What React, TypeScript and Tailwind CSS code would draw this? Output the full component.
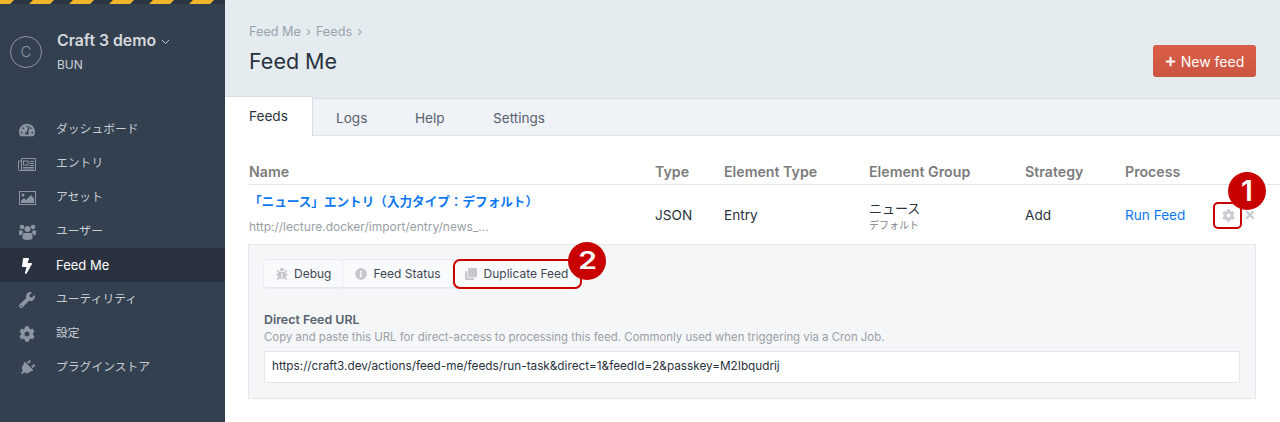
import {
  FaBolt,
  FaBug,
  FaClone,
  FaCog,
  FaInfoCircle,
  FaPlug,
  FaPlus,
  FaTachometerAlt,
  FaTimes,
  FaWrench,
} from "react-icons/fa";

const FONT = "font-['Inter','Noto_Sans_CJK_JP',sans-serif]";

const NewspaperIcon = ({ className }: { className?: string }) => (
  <svg className={className} width="18" height="13" viewBox="0 0 18 13" fill="none">
    <path d="M3.5.5h14v12H1.5a1 1 0 0 1-1-1V3h3" stroke="currentColor" />
    <path d="M3.5 1v11" stroke="currentColor" />
    <rect x="5.5" y="3" width="4.5" height="4" stroke="currentColor" />
    <path d="M11.5 3.5H16M11.5 5.5H16M11.5 7.5H16M5 9.5H16M5 11H16" stroke="currentColor" />
  </svg>
);

const ImageIcon = ({ className }: { className?: string }) => (
  <svg className={className} width="17" height="14" viewBox="0 0 17 14" fill="none">
    <rect x="0.5" y="0.5" width="16" height="13" stroke="currentColor" />
    <circle cx="4" cy="4" r="1.5" fill="currentColor" />
    <path d="M2 12v-2l3-3 2 2 5-5 3 3.5V12z" fill="currentColor" />
  </svg>
);

const UsersIcon = ({ className }: { className?: string }) => (
  <svg className={className} width="17" height="16" viewBox="0 0 17 16" fill="currentColor">
    <circle cx="3" cy="3" r="2.3" />
    <circle cx="14" cy="3" r="2.3" />
    <circle cx="8.5" cy="5" r="3" />
    <path d="M0 6.5h3.6a4.5 4.5 0 0 0 .6 2.4C3 9.4 2.4 10.4 2.3 11.5 1 11.3 0 10.8 0 10z" />
    <path d="M17 6.5h-3.6a4.5 4.5 0 0 1-.6 2.4c1.2.5 1.8 1.5 1.9 2.6 1.3-.2 2.3-.7 2.3-1.5z" />
    <path d="M5 9h7c1 .3 1.500 1.300 1.500 3v2c0 1-2 2-5 2s-5-1-5-2v-2c0-1.700.500-2.700 1.500-3z" />
  </svg>
);

const navItems = [
  { label: "ダッシュボード", icon: FaTachometerAlt },
  { label: "エントリ", icon: NewspaperIcon },
  { label: "アセット", icon: ImageIcon },
  { label: "ユーザー", icon: UsersIcon },
  { label: "Feed Me", icon: FaBolt, active: true },
  { label: "ユーティリティ", icon: FaWrench },
  { label: "設定", icon: FaCog },
  { label: "プラグインストア", icon: FaPlug, iconClass: "rotate-45" },
];

const Sidebar = () => {
  return (
    <aside className="w-[225px] shrink-0 bg-[#33404f] flex flex-col">
      <svg width="225" height="4" className="block shrink-0">
        <rect width="225" height="4" fill="#2c3643" />
        {[-40, 0, 40, 80, 120, 160, 200].map((x) => (
          <polygon key={x} points={`${x + 33},0 ${x + 54},0 ${x + 50},4 ${x + 29},4`} fill="#f5b32a" />
        ))}
      </svg>

      {/* Site name */}
      <div className="flex items-center pl-[10px] h-[96px]">
        <div className="w-8 h-8 rounded-full border border-[#8b96a2] flex items-center justify-center text-[#8b96a2] text-[15px] font-light">
          C
        </div>
        <div className="ml-[15px]">
          <div className="flex items-center text-[15.800px] leading-5 font-semibold text-[#d5d9de]">
            Craft 3 demo
            <svg className="ml-[5px] mt-[2px]" width="9" height="6" viewBox="0 0 9 6" fill="none">
              <path d="M1 1l3.5 3.5L8 1" stroke="#c6cbd1" strokeWidth="1" />
            </svg>
          </div>
          <div className="mt-[6px] text-xs leading-4 text-[#cbd0d6]">BUN</div>
        </div>
      </div>

      <nav className="mt-[12px]">
        {navItems.map((item) => {
          const Icon = item.icon;
          return (
            <div
              key={item.label}
              className={`h-[34px] pt-[2px] flex items-center pl-[18px] ${
                item.active ? "bg-[#29323e] text-white text-[13px]" : "text-[#c9ced4] text-[11.800px]"
              }`}
            >
              <span className="w-[38px] flex">
                <span className="w-[18px] flex justify-center">
                  <Icon
                    size={16}
                    className={`${item.active ? "text-white" : "text-[#8b96a2]"} ${item.iconClass || ""}`}
                  />
                </span>
              </span>
              {item.label}
            </div>
          );
        })}
      </nav>
    </aside>
  );
};

const PageHeader = () => {
  return (
    <div className="h-[99px] bg-[#e4ecf0] border-b border-[#d6dee5] flex justify-between pl-6 pr-6">
      <div className="pt-[24px]">
        <div className="flex items-center text-[12.700px] leading-[15px] text-[#9aa3ad]">
          Feed Me<span className="mx-[5px]">›</span>Feeds<span className="ml-[5px]">›</span>
        </div>
        <div className="mt-[7px] text-[21.500px] leading-[30px] text-[#29323d]">Feed Me</div>
      </div>
      <button className="mt-[45px] h-8 w-[103px] rounded-[3px] bg-linear-to-b from-[#da5f49] to-[#cb5541] text-white text-[14px] flex items-center justify-center">
        <FaPlus size={11} className="mr-[5px]" />
        New feed
      </button>
    </div>
  );
};

const Tabs = () => {
  return (
    <div className="h-[37px] bg-[#eff3f7] border-b border-[#dfe4ea] flex text-[13.600px] text-[#56616e]">
      <div className="w-[88px] h-[40px] -mt-[3px] bg-white border-r border-t border-[#d6dee5] rounded-tr-[3px] pl-6 pt-[9px] text-[#29323d] relative">
        Feeds
      </div>
      <div className="w-[102px] pl-[23px] pt-[9px]">Logs</div>
      <div className="w-[78px] pt-[9px]">Help</div>
      <div className="pt-[9px]">Settings</div>
    </div>
  );
};

const FeedTable = () => {
  const headCols = ["Name", "Type", "Element Type", "Element Group", "Strategy", "Process"];
  return (
    <div className="text-[13.600px]">
      <div className="grid grid-cols-[406px_69px_145px_156px_100px_131px] h-[25px] border-b border-[#e3e5e8] text-[#7c7c7c] text-[14.200px] font-semibold leading-[20px]">
        {headCols.map((c) => (
          <div key={c} className="pt-[2px]">{c}</div>
        ))}
      </div>
      <div className="grid grid-cols-[406px_69px_145px_156px_100px_131px] h-[59px] items-center text-[#29323d]">
        <div>
          <div className="text-[12.600px] font-semibold text-[#0d78f2] leading-4 mb-[10px] -mt-[2px]">
            「ニュース」エントリ（入力タイプ：デフォルト）
          </div>
          <div className="text-[12px] leading-[14px] text-[#9a9fa6]">http://lecture.docker/import/entry/news_...</div>
        </div>
        <div className="mt-[2px]">JSON</div>
        <div className="mt-[2px]">Entry</div>
        <div className="mt-[2px]">
          <div className="text-[13px] leading-[15px]">ニュース</div>
          <div className="text-[10px] leading-3 mt-[3px] text-[#7c8187]">デフォルト</div>
        </div>
        <div className="mt-[2px]">Add</div>
        <div className="mt-[2px] flex items-center justify-between">
          <span className="text-[#0d78f2]">Run Feed</span>
          <span className="flex items-center text-[#c9ccd0]">
            <FaCog size={13} />
            <FaTimes size={12} className="ml-[9px]" />
          </span>
        </div>
      </div>
    </div>
  );
};

const PanelButton = ({ icon: Icon, label, iconGap }: { icon: typeof FaBug; label: string; iconGap: string }) => {
  return (
    <div className="h-7 flex items-center pl-3 pr-3 bg-[#f9fafb] border-b border-[#e3e6ea] rounded-[3px] shadow-[0_0_0_1px_rgba(220,224,230,0.45)] text-xs text-[#3f4854]">
      <Icon size={12} className={`${iconGap} text-[#c4c7cc]`} />
      {label}
    </div>
  );
};

const DetailPanel = () => {
  return (
    <div className="-ml-px w-[1008px] h-[155px] bg-[#f5f6f8] border border-[#e4e7ea] pt-[15px] pl-[15px] pr-[15px]">
      <div className="flex">
        <PanelButton icon={FaBug} label="Debug" iconGap="mr-[6px]" />
        <PanelButton icon={FaInfoCircle} label="Feed Status" iconGap="mr-[6px]" />
        <PanelButton icon={FaClone} label="Duplicate Feed" iconGap="mr-[7px]" />
      </div>
      <div className="mt-[24px] text-[12.400px] font-semibold leading-4 text-[#56616e]">Direct Feed URL</div>
      <div className="mt-[1px] text-[11.400px] leading-4 text-[#9a9fa6]">
        Copy and paste this URL for direct-access to processing this feed. Commonly used when triggering via a Cron Job.
      </div>
      <div className="mt-[6px] h-8 bg-white border border-[#e3e6ea] pl-[7px] flex items-center text-[11.750px] text-[#29323d]">
        https://craft3.dev/actions/feed-me/feeds/run-task&amp;direct=1&amp;feedId=2&amp;passkey=M2Ibqudrij
      </div>
    </div>
  );
};

const Marker = ({ n, className, textClass }: { n: string; className: string; textClass: string }) => {
  return (
    <div
      className={`absolute w-[38px] h-[38px] rounded-full bg-[#c90000] text-white font-bold flex items-center justify-center ${className}`}
    >
      <span className={textClass}>{n}</span>
    </div>
  );
};

export default function App() {
  return (
    <div className={`${FONT} relative w-[1280px] h-[422px] overflow-hidden flex bg-white`}>
      <Sidebar />
      <main className="flex-1 flex flex-col">
        <PageHeader />
        <Tabs />
        <div className="pl-6 pt-[24px]">
          <FeedTable />
          <DetailPanel />
        </div>
      </main>

      {/* callouts */}
      <div className="absolute left-[1213px] top-[202px] w-[29px] h-[27px] rounded-[5px] border-2 border-[#c90000]" />
      <Marker n="1" className="left-[1228px] top-[172px]" textClass="text-[28px] font-semibold" />
      <div className="absolute left-[453px] top-[259px] w-[129px] h-[30px] rounded-[7px] border-2 border-[#c90000]" />
      <Marker n="2" className="left-[568px] top-[242px]" textClass="text-[24px] font-semibold scale-x-125" />
    </div>
  );
}
